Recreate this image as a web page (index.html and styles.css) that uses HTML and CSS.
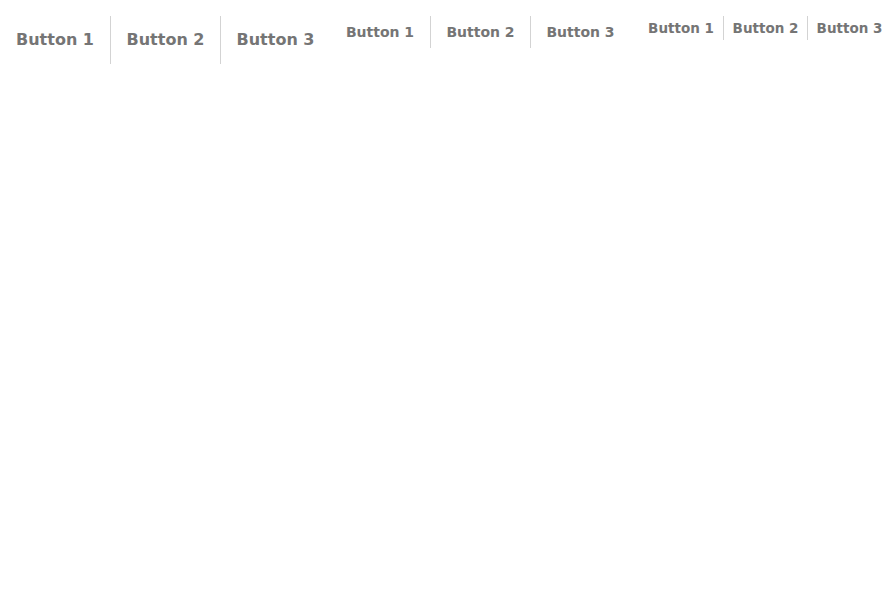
FILE: index.html
```html
<!DOCTYPE html>
<html>
<head>
<meta charset="utf-8">
<link rel="stylesheet" href="styles.css">
</head>
<body>
<div class="page">
  <div class="group group-lg">
    <button class="btn">Button 1</button>
    <button class="btn">Button 2</button>
    <button class="btn">Button 3</button>
  </div>
  <div class="group group-md">
    <button class="btn">Button 1</button>
    <button class="btn">Button 2</button>
    <button class="btn">Button 3</button>
  </div>
  <div class="group group-sm">
    <button class="btn">Button 1</button>
    <button class="btn">Button 2</button>
    <button class="btn">Button 3</button>
  </div>
</div>
</body>
</html>
```
FILE: styles.css
```css
html, body {
  margin: 0;
  padding: 0;
  background: #fff;
}
.page {
  display: flex;
  align-items: flex-start;
  padding-top: 16px;
  white-space: nowrap;
}
.group {
  display: flex;
  flex-shrink: 0;
}
.btn {
  box-sizing: border-box;
  margin: 0;
  border: 0;
  background: transparent;
  font-family: "DejaVu Sans", sans-serif;
  font-weight: bold;
  color: #757575;
  padding: 0;
  display: flex;
  align-items: center;
  justify-content: center;
  flex-shrink: 0;
  cursor: pointer;
}
.btn + .btn {
  border-left: 1px solid #d3d3d3;
}
.group-lg .btn {
  width: 110px;
  height: 48px;
  font-size: 16px;
  padding-bottom: 2px;
}
.group-lg .btn + .btn {
  width: 110px;
}
.group-md .btn {
  width: 100px;
  height: 32px;
  font-size: 14px;
}
.group-sm {
  margin-left: 9px;
}
.group-sm .btn {
  width: 84px;
  height: 24px;
  font-size: 13.5px;
}
```
